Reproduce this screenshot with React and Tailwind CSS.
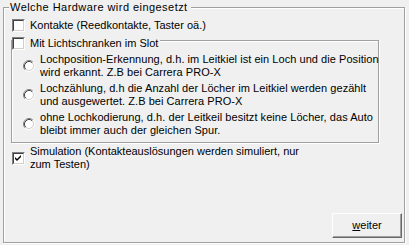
import React from "react";

function CheckBox({ checked }) {
  return (
    <div className="w-[13px] h-[13px] shrink-0 border border-t-[#808080] border-l-[#808080] border-r-white border-b-white">
      <div className="w-full h-full border border-t-[#404040] border-l-[#404040] border-r-[#d4d0c8] border-b-[#d4d0c8] bg-white flex items-center justify-center">
        {checked && (
          <svg width="7" height="7" viewBox="0 0 7 7">
            <path d="M0 2 L2 4 L6 0 L6 2 L2 6 L0 4 Z" fill="#000" />
          </svg>
        )}
      </div>
    </div>
  );
}

function Radio() {
  return (
    <svg width="12" height="12" viewBox="0 0 12 12" className="shrink-0">
      <circle cx="6" cy="6" r="4.5" fill="#fff" />
      <path d="M2.11 9.89 A5.5 5.5 0 0 1 9.89 2.11" fill="none" stroke="#808080" strokeWidth="1" />
      <path d="M2.82 9.18 A4.5 4.5 0 0 1 9.18 2.82" fill="none" stroke="#404040" strokeWidth="1" />
      <path d="M9.89 2.11 A5.5 5.5 0 0 1 2.11 9.89" fill="none" stroke="#ffffff" strokeWidth="1" />
      <path d="M9.18 2.82 A4.5 4.5 0 0 1 2.82 9.18" fill="none" stroke="#d4d0c8" strokeWidth="1" />
    </svg>
  );
}

function RadioItem({ lines }) {
  return (
    <div className="flex items-center gap-[5px]">
      <Radio />
      <div className="whitespace-nowrap tracking-[0.05px]">
        {lines[0]}
        <br />
        {lines[1]}
      </div>
    </div>
  );
}

export default function App() {
  return (
    <div className="w-[409px] h-[245px] bg-[#f0f0f0] pt-[7px] pl-[3px] font-['Liberation_Sans',Arial,sans-serif] text-[11px] leading-[13px] text-black overflow-hidden">
      <div className="relative flex flex-col w-[402px] h-[236px] border border-[#a0a0a0] shadow-[inset_1px_1px_0_#fff,1px_1px_0_#fff] pl-[8px] pt-[11px]">
        <div className="absolute left-[5px] top-[-7px] pl-[1px] pr-[3px] bg-[#f0f0f0] whitespace-nowrap tracking-[0.45px]">
          Welche Hardware wird eingesetzt
        </div>

        <div className="flex items-center gap-[5px]">
          <CheckBox />
          <span className="whitespace-nowrap">Kontakte (Reedkontakte, Taster oä.)</span>
        </div>

        <div className="relative mt-[8px] ml-[-1px] w-[368px] border border-[#a0a0a0] shadow-[inset_1px_1px_0_#fff,1px_1px_0_#fff] pt-[12px] pl-[11px] pb-[5px]">
          <div className="absolute left-0 top-[-4px] flex items-center gap-[5px] bg-[#f0f0f0] pr-[2px]">
            <CheckBox />
            <span className="whitespace-nowrap">Mit Lichtschranken im Slot</span>
          </div>
          <div className="flex flex-col gap-[3px]">
            <RadioItem
              lines={[
                "Lochposition-Erkennung, d.h. im Leitkiel ist ein Loch und die Position",
                "wird erkannt. Z.B bei Carrera PRO-X",
              ]}
            />
            <RadioItem
              lines={[
                "Lochzählung, d.h die Anzahl der Löcher im Leitkiel werden gezählt",
                "und ausgewertet. Z.B bei Carrera PRO-X",
              ]}
            />
            <RadioItem
              lines={[
                "ohne Lochkodierung, d.h. der Leitkeil besitzt keine Löcher, das Auto",
                "bleibt immer auch der gleichen Spur.",
              ]}
            />
          </div>
        </div>

        <div className="mt-[2px] flex items-center gap-[5px]">
          <CheckBox checked />
          <div className="whitespace-nowrap">
            Simulation (Kontakteauslösungen werden simuliert, nur
            <br />
            zum Testen)
          </div>
        </div>

        <button className="mt-auto self-end mr-[2px] mb-[4px] w-[70px] h-[25px] border border-t-white border-l-white border-r-[#696969] border-b-[#696969] shadow-[inset_-1px_-1px_0_#a0a0a0] bg-[#f0f0f0] flex items-center justify-center text-[11px] leading-[13px]">
          <span>
            <span className="underline">w</span>eiter
          </span>
        </button>
      </div>
    </div>
  );
}
